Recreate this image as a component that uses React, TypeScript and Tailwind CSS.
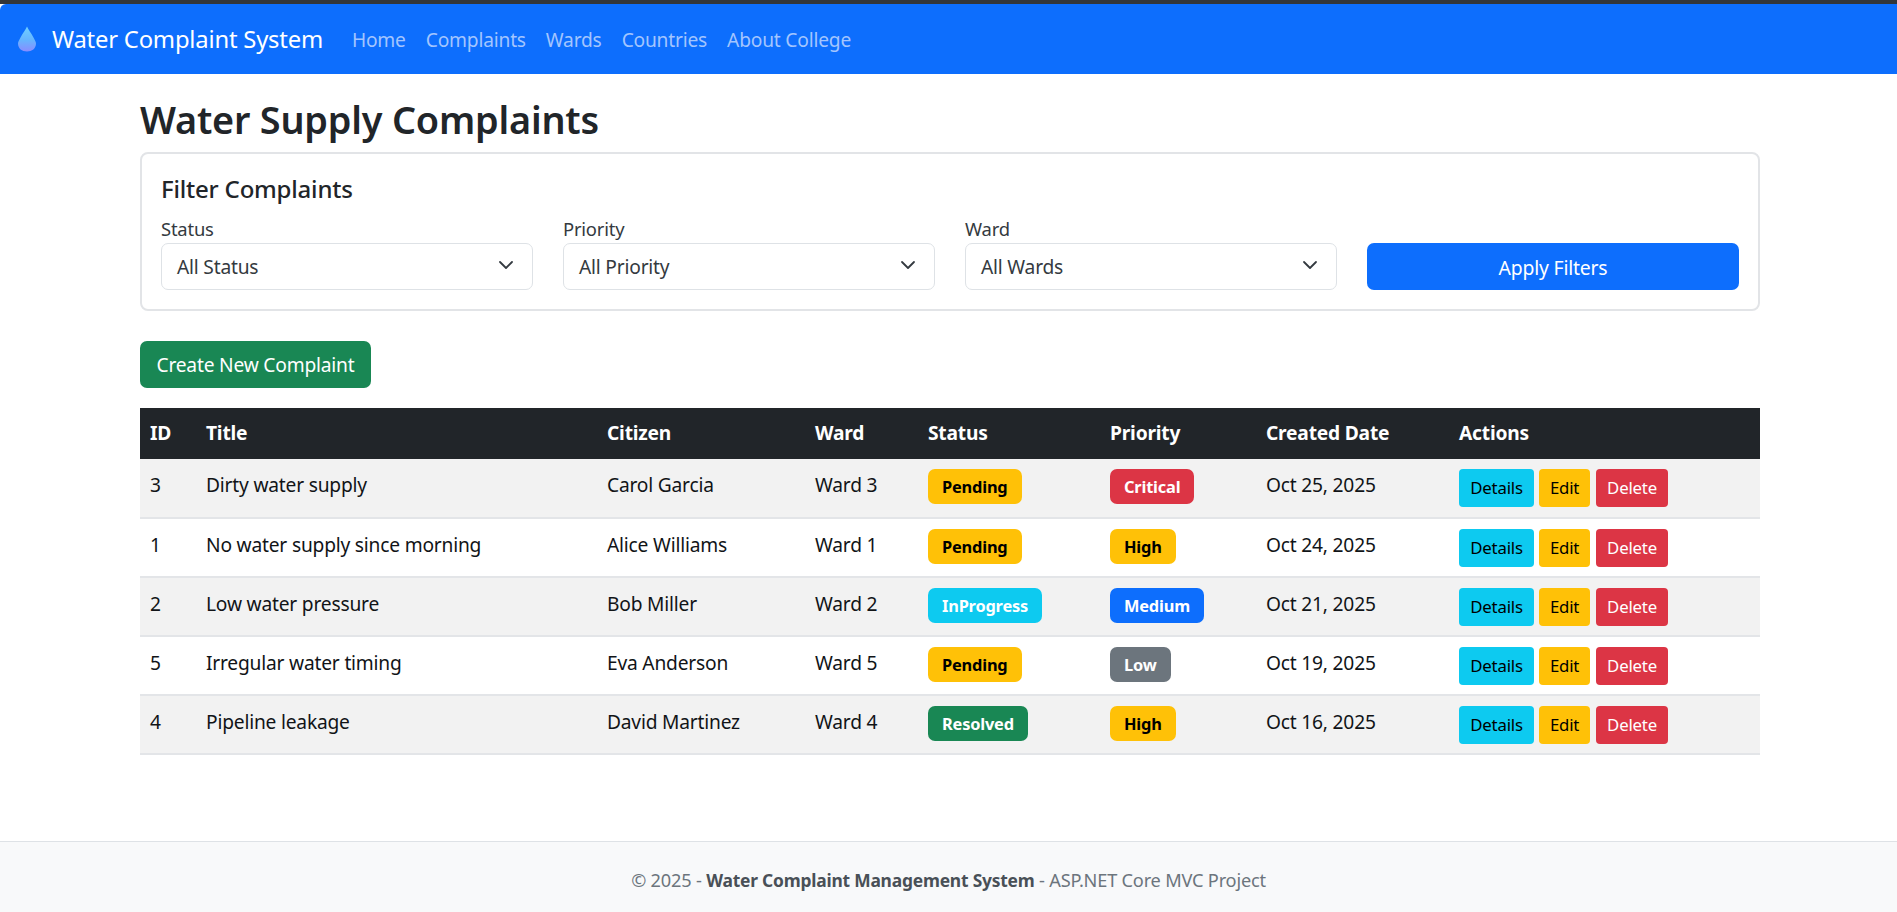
import React from "react";

const FONT = "font-['Noto_Sans',sans-serif]";

type Row = {
  id: number; title: string; citizen: string; ward: string;
  status: string; statusCls: string; priority: string; priorityCls: string; date: string;
};

const yellow = "bg-[#ffc107] text-black";
const cyan = "bg-[#0dcaf0] text-white";
const red = "bg-[#dc3545] text-white";
const blue = "bg-[#0d6efd] text-white";
const gray = "bg-[#6c757d] text-white";
const green = "bg-[#198754] text-white";

const rows: Row[] = [
  { id: 3, title: "Dirty water supply", citizen: "Carol Garcia", ward: "Ward 3", status: "Pending", statusCls: yellow, priority: "Critical", priorityCls: red, date: "Oct 25, 2025" },
  { id: 1, title: "No water supply since morning", citizen: "Alice Williams", ward: "Ward 1", status: "Pending", statusCls: yellow, priority: "High", priorityCls: yellow, date: "Oct 24, 2025" },
  { id: 2, title: "Low water pressure", citizen: "Bob Miller", ward: "Ward 2", status: "InProgress", statusCls: cyan, priority: "Medium", priorityCls: blue, date: "Oct 21, 2025" },
  { id: 5, title: "Irregular water timing", citizen: "Eva Anderson", ward: "Ward 5", status: "Pending", statusCls: yellow, priority: "Low", priorityCls: gray, date: "Oct 19, 2025" },
  { id: 4, title: "Pipeline leakage", citizen: "David Martinez", ward: "Ward 4", status: "Resolved", statusCls: green, priority: "High", priorityCls: yellow, date: "Oct 16, 2025" },
];

function Drop() {
  return (
    <svg width="18" height="26" viewBox="0 0 18 26" className="shrink-0">
      <defs>
        <linearGradient id="dropg" x1="0" y1="0" x2="0" y2="1">
          <stop offset="0" stopColor="#6fd0ff" />
          <stop offset="0.55" stopColor="#66b4ff" />
          <stop offset="1" stopColor="#8a8cff" />
        </linearGradient>
      </defs>
      <path d="M9 0.5 C10.5 4 13 6.5 15.2 11 C17 14.5 18 16 18 17.5 C18 22.5 14 25.5 9 25.5 C4 25.5 0 22.5 0 17.5 C0 16 1 14.5 2.8 11 C5 6.5 7.5 4 9 0.5 Z" fill="url(#dropg)" />
    </svg>
  );
}

function Chevron() {
  return (
    <svg width="16" height="16" viewBox="0 0 16 16" fill="none" className="shrink-0 mb-[3px]">
      <path d="M2 5l6 6 6-6" stroke="#343a40" strokeWidth="1.8" strokeLinecap="round" strokeLinejoin="round" />
    </svg>
  );
}

function Select({ label, value }: { label: string; value: string }) {
  return (
    <div className="w-[372px] shrink-0">
      <div className="text-[18.4px] leading-[27px] text-[#343a40] mb-[1px]">{label}</div>
      <div className="h-[47px] border border-[#dee2e6] rounded-[7px] pl-[15px] pr-[18px] flex items-center justify-between text-[19.2px] text-[#343a40] bg-white">
        <span className="pt-[2px]">{value}</span>
        <Chevron />
      </div>
    </div>
  );
}

function Badge({ cls, children }: { cls: string; children: React.ReactNode }) {
  return (
    <span className={`inline-flex items-center h-[35px] px-[14px] pt-[2px] rounded-[7px] text-[16.4px] font-bold ${cls}`}>
      {children}
    </span>
  );
}

function Btn({ cls, children }: { cls: string; children: React.ReactNode }) {
  return (
    <span className={`inline-flex items-center justify-center h-[38px] rounded-[4px] text-[16.8px] ${cls}`}>
      {children}
    </span>
  );
}

export default function App() {
  const th = "text-left font-bold px-[10px] h-[51px] align-middle text-white text-[19.2px]";
  const base = "px-[10px] align-middle text-[19.2px] text-[#111417]";
  const td = `${base} pb-[5px]`;
  const tdc = `${base} pb-[3px]`;
  return (
    <div className={`${FONT} bg-white min-h-[912px] flex flex-col tracking-[-0.2px]`}>
      <div className="h-[4px] bg-[#333639] shrink-0" />
      <nav className="h-[70px] bg-[#0d6efd] flex items-center pl-[18px] shrink-0 rounded-tl-[6px]">
        <Drop />
        <span className="ml-[16px] pt-[2px] text-[23.8px] text-white">Water Complaint System</span>
        <div className="ml-[29px] flex gap-[20px] text-[19.2px] text-[#a3c5fe] pt-[3px]">
          <span>Home</span>
          <span>Complaints</span>
          <span>Wards</span>
          <span>Countries</span>
          <span>About College</span>
        </div>
      </nav>

      <main className="w-[1620px] ml-[140px] flex-1">
        <h1 className="text-[37.8px] leading-[48px] font-semibold text-[#212529] mt-[22px] mb-[8px]">Water Supply Complaints</h1>

        <section className="h-[159px] border-2 border-[#e2e4e7] rounded-[8px] px-[19px] pt-[21px]">
          <h5 className="text-[24px] leading-[28px] font-medium text-[#212529] mb-[12px]">Filter Complaints</h5>
          <div className="flex gap-[30px] items-end">
            <Select label="Status" value="All Status" />
            <Select label="Priority" value="All Priority" />
            <Select label="Ward" value="All Wards" />
            <div className="w-[372px] h-[47px] pt-[2px] bg-[#0d6efd] text-white text-[19.4px] rounded-[7px] flex items-center justify-center">Apply Filters</div>
          </div>
        </section>

        <div className="mt-[30px] mb-[20px] w-[231px] h-[47px] pt-[2px] bg-[#198754] text-white text-[19.2px] rounded-[7px] flex items-center justify-center">
          Create New Complaint
        </div>

        <table className="w-[1620px] table-fixed border-collapse">
          <colgroup>
            <col className="w-[56px]" />
            <col className="w-[401px]" />
            <col className="w-[208px]" />
            <col className="w-[113px]" />
            <col className="w-[182px]" />
            <col className="w-[156px]" />
            <col className="w-[193px]" />
            <col className="w-[311px]" />
          </colgroup>
          <thead>
            <tr className="bg-[#212529]">
              {["ID", "Title", "Citizen", "Ward", "Status", "Priority", "Created Date", "Actions"].map((h) => (
                <th key={h} className={th}>{h}</th>
              ))}
            </tr>
          </thead>
          <tbody>
            {rows.map((r, i) => (
              <tr key={r.id} className={`h-[59px] border-b-2 border-[#e3e5e8] ${i % 2 === 0 ? "bg-[#f2f2f2]" : "bg-white"}`}>
                <td className={td}>{r.id}</td>
                <td className={td}>{r.title}</td>
                <td className={td}>{r.citizen}</td>
                <td className={td}>{r.ward}</td>
                <td className={tdc}><Badge cls={r.statusCls}>{r.status}</Badge></td>
                <td className={tdc}><Badge cls={r.priorityCls}>{r.priority}</Badge></td>
                <td className={td}>{r.date}</td>
                <td className={tdc}>
                  <div className="flex gap-[5px] mt-[3px]">
                    <Btn cls="w-[75px] bg-[#0dcaf0] text-black">Details</Btn>
                    <Btn cls="w-[51px] bg-[#ffc107] text-black">Edit</Btn>
                    <Btn cls="w-[72px] ml-[1px] bg-[#dc3545] text-white">Delete</Btn>
                  </div>
                </td>
              </tr>
            ))}
          </tbody>
        </table>
      </main>

      <footer className="h-[71px] shrink-0 border-t border-[#dee2e6] bg-[#f8f9fa] flex items-center justify-center text-[18.2px] text-[#6c757d] pt-[8px]">
        <span>© 2025 - <strong className="font-bold text-[17.4px] text-[#495057]">Water Complaint Management System</strong> - ASP.NET Core MVC Project</span>
      </footer>
    </div>
  );
}
